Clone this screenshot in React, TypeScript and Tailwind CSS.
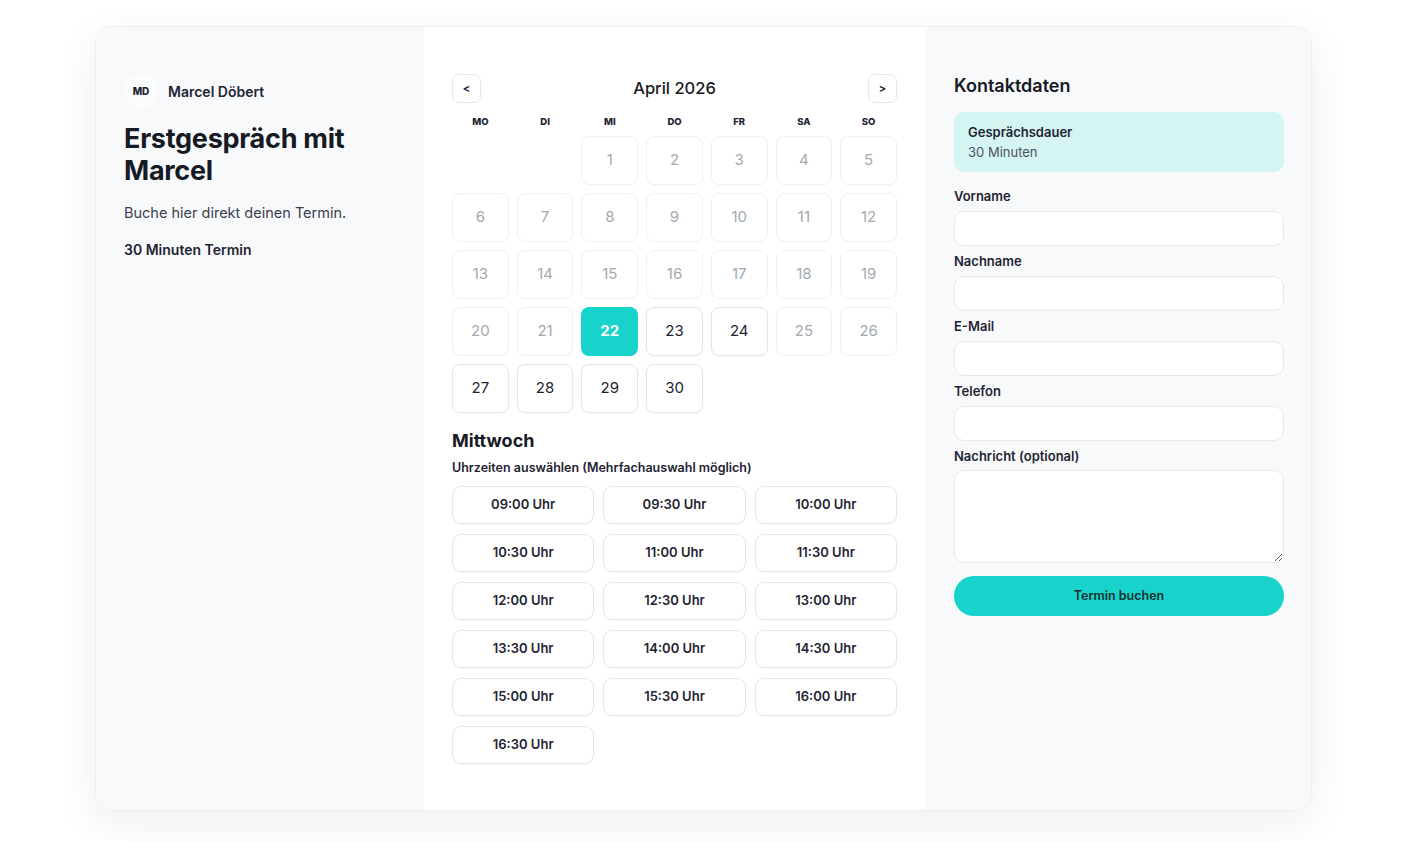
import React, { useState } from "react";

const FONT = { fontFamily: "Inter, 'Noto Sans', sans-serif" };

const WEEKDAYS = ["MO", "DI", "MI", "DO", "FR", "SA", "SO"];
// April 2026 starts on a Wednesday
const LEADING_BLANKS = 2;
const DAYS_IN_MONTH = 30;
const AVAILABLE = [22, 23, 24, 27, 28, 29, 30];

const SLOTS = [
  "09:00", "09:30", "10:00", "10:30", "11:00", "11:30",
  "12:00", "12:30", "13:00", "13:30", "14:00", "14:30",
  "15:00", "15:30", "16:00", "16:30",
];

function Field({ label, textarea }: { label: string; textarea?: boolean }) {
  return (
    <div className="flex flex-col">
      <label className="text-[13px] leading-[18px] font-semibold text-[#1f2433]">{label}</label>
      {textarea ? (
        <textarea
          className="mt-[5px] h-[93px] w-full resize-y rounded-[10px] border border-[#e6e8ec] bg-white px-3 py-2 text-sm outline-none"
        />
      ) : (
        <input
          type="text"
          className="mt-[6px] h-[35px] w-full rounded-[10px] border border-[#e6e8ec] bg-white px-3 text-sm outline-none"
        />
      )}
    </div>
  );
}

export default function App() {
  const [selectedDay, setSelectedDay] = useState(22);
  const [slots, setSlots] = useState<string[]>([]);

  const toggleSlot = (s: string) =>
    setSlots((prev) => (prev.includes(s) ? prev.filter((x) => x !== s) : [...prev, s]));

  const cells: (number | null)[] = [
    ...Array.from({ length: LEADING_BLANKS }, () => null),
    ...Array.from({ length: DAYS_IN_MONTH }, (_, i) => i + 1),
  ];

  return (
    <div className="min-h-screen bg-white pt-[26px] pb-8" style={FONT}>
      <div className="mx-auto flex w-[1217px] overflow-hidden rounded-[16px] border border-[#eceef1] shadow-[0_12px_40px_rgba(15,23,42,0.07)]">
        {/* host info */}
        <aside className="w-[328px] shrink-0 bg-[#f8f9fb] px-[28px] pt-[47px]">
          <div className="flex items-center gap-[10px]">
            <div className="flex h-[34px] w-[34px] items-center justify-center rounded-full bg-[#fbfcfd] text-[10px] font-extrabold text-[#1f2433]">
              MD
            </div>
            <span className="text-[14px] font-semibold text-[#1f2433]">Marcel Döbert</span>
          </div>
          <h1 className="mt-[15px] text-[27px] leading-[32px] font-bold tracking-[-0.01em] text-[#161a24]">
            Erstgespräch mit
            <br />
            Marcel
          </h1>
          <p className="mt-[15px] text-[14.5px] leading-[22px] text-[#3b4150]">Buche hier direkt deinen Termin.</p>
          <p className="mt-[16px] text-[14px] leading-[20px] font-semibold text-[#1f2433]">30 Minuten Termin</p>
        </aside>

        {/* calendar & slots */}
        <main className="w-[501px] shrink-0 bg-white px-[28px] pt-[47px] pb-[46px]">
          <div className="flex h-[29px] items-center justify-between">
            <button className="flex h-[29px] w-[29px] items-center justify-center rounded-[7px] border border-[#e6e8ec] bg-white text-[11px] font-bold text-[#1f2433]">
              &lt;
            </button>
            <span className="text-[16.5px] font-medium text-[#161a24]">April 2026</span>
            <button className="flex h-[29px] w-[29px] items-center justify-center rounded-[7px] border border-[#e6e8ec] bg-white text-[11px] font-bold text-[#1f2433]">
              &gt;
            </button>
          </div>

          <div className="mt-[13px] grid grid-cols-7 gap-x-[8px]">
            {WEEKDAYS.map((d) => (
              <div key={d} className="text-center text-[9.5px] leading-[12px] font-extrabold text-[#1f2433]">
                {d}
              </div>
            ))}
          </div>

          <div className="mt-[8px] grid grid-cols-7 gap-[8px]">
            {cells.map((day, i) => {
              if (day === null) return <div key={`b${i}`} className="h-[49px]" />;
              const available = AVAILABLE.includes(day);
              const selected = day === selectedDay;
              return (
                <button
                  key={day}
                  disabled={!available}
                  onClick={() => setSelectedDay(day)}
                  className={
                    selected
                      ? "h-[49px] rounded-[8px] bg-[#17d3cb] text-[15px] font-bold text-white"
                      : available
                        ? "h-[49px] rounded-[8px] border border-[#e3e5e9] bg-white text-[15px] text-[#1f2433] shadow-[0_1px_2px_rgba(0,0,0,0.03)]"
                        : "h-[49px] rounded-[8px] border border-[#eef0f2] bg-white text-[15px] text-[#a4a8b0]"
                  }
                >
                  {day}
                </button>
              );
            })}
          </div>

          <h2 className="mt-[16px] text-[18px] leading-[24px] font-bold text-[#161a24]">Mittwoch</h2>
          <p className="mt-[6px] text-[12.5px] leading-[18px] font-semibold text-[#1f2433]">
            Uhrzeiten auswählen (Mehrfachauswahl möglich)
          </p>

          <div className="mt-[9px] grid grid-cols-3 gap-x-[9px] gap-y-[10px]">
            {SLOTS.map((s) => {
              const on = slots.includes(s);
              return (
                <button
                  key={s}
                  onClick={() => toggleSlot(s)}
                  className={
                    on
                      ? "h-[38px] rounded-[9px] border border-[#17d3cb] bg-[#17d3cb] text-[13px] font-semibold text-white"
                      : "h-[38px] rounded-[9px] border border-[#e3e5e9] bg-white text-[13px] font-semibold text-[#1f2433] shadow-[0_1px_2px_rgba(0,0,0,0.03)]"
                  }
                >
                  {s} Uhr
                </button>
              );
            })}
          </div>
        </main>

        {/* contact form */}
        <section className="flex-1 bg-[#f8f9fb] pt-[47px] pr-[27px] pl-[29px]">
          <h2 className="text-[18px] leading-[24px] font-semibold text-[#161a24]">Kontaktdaten</h2>
          <div className="mt-[14px] rounded-[10px] bg-[#d5f5f3] px-[14px] py-[10px]">
            <div className="text-[13px] leading-[20px] font-semibold text-[#1f2433]">Gesprächsdauer</div>
            <div className="text-[13px] leading-[20px] text-[#4b5263]">30 Minuten</div>
          </div>

          <div className="mt-[15px] flex flex-col gap-[6px]">
            <Field label="Vorname" />
            <Field label="Nachname" />
            <Field label="E-Mail" />
            <Field label="Telefon" />
            <Field label="Nachricht (optional)" textarea />
          </div>

          <button className="mt-[13px] h-[40px] w-full rounded-full bg-[#17d3cb] text-[12.5px] font-semibold text-[#16302f]">
            Termin buchen
          </button>
        </section>
      </div>
    </div>
  );
}
